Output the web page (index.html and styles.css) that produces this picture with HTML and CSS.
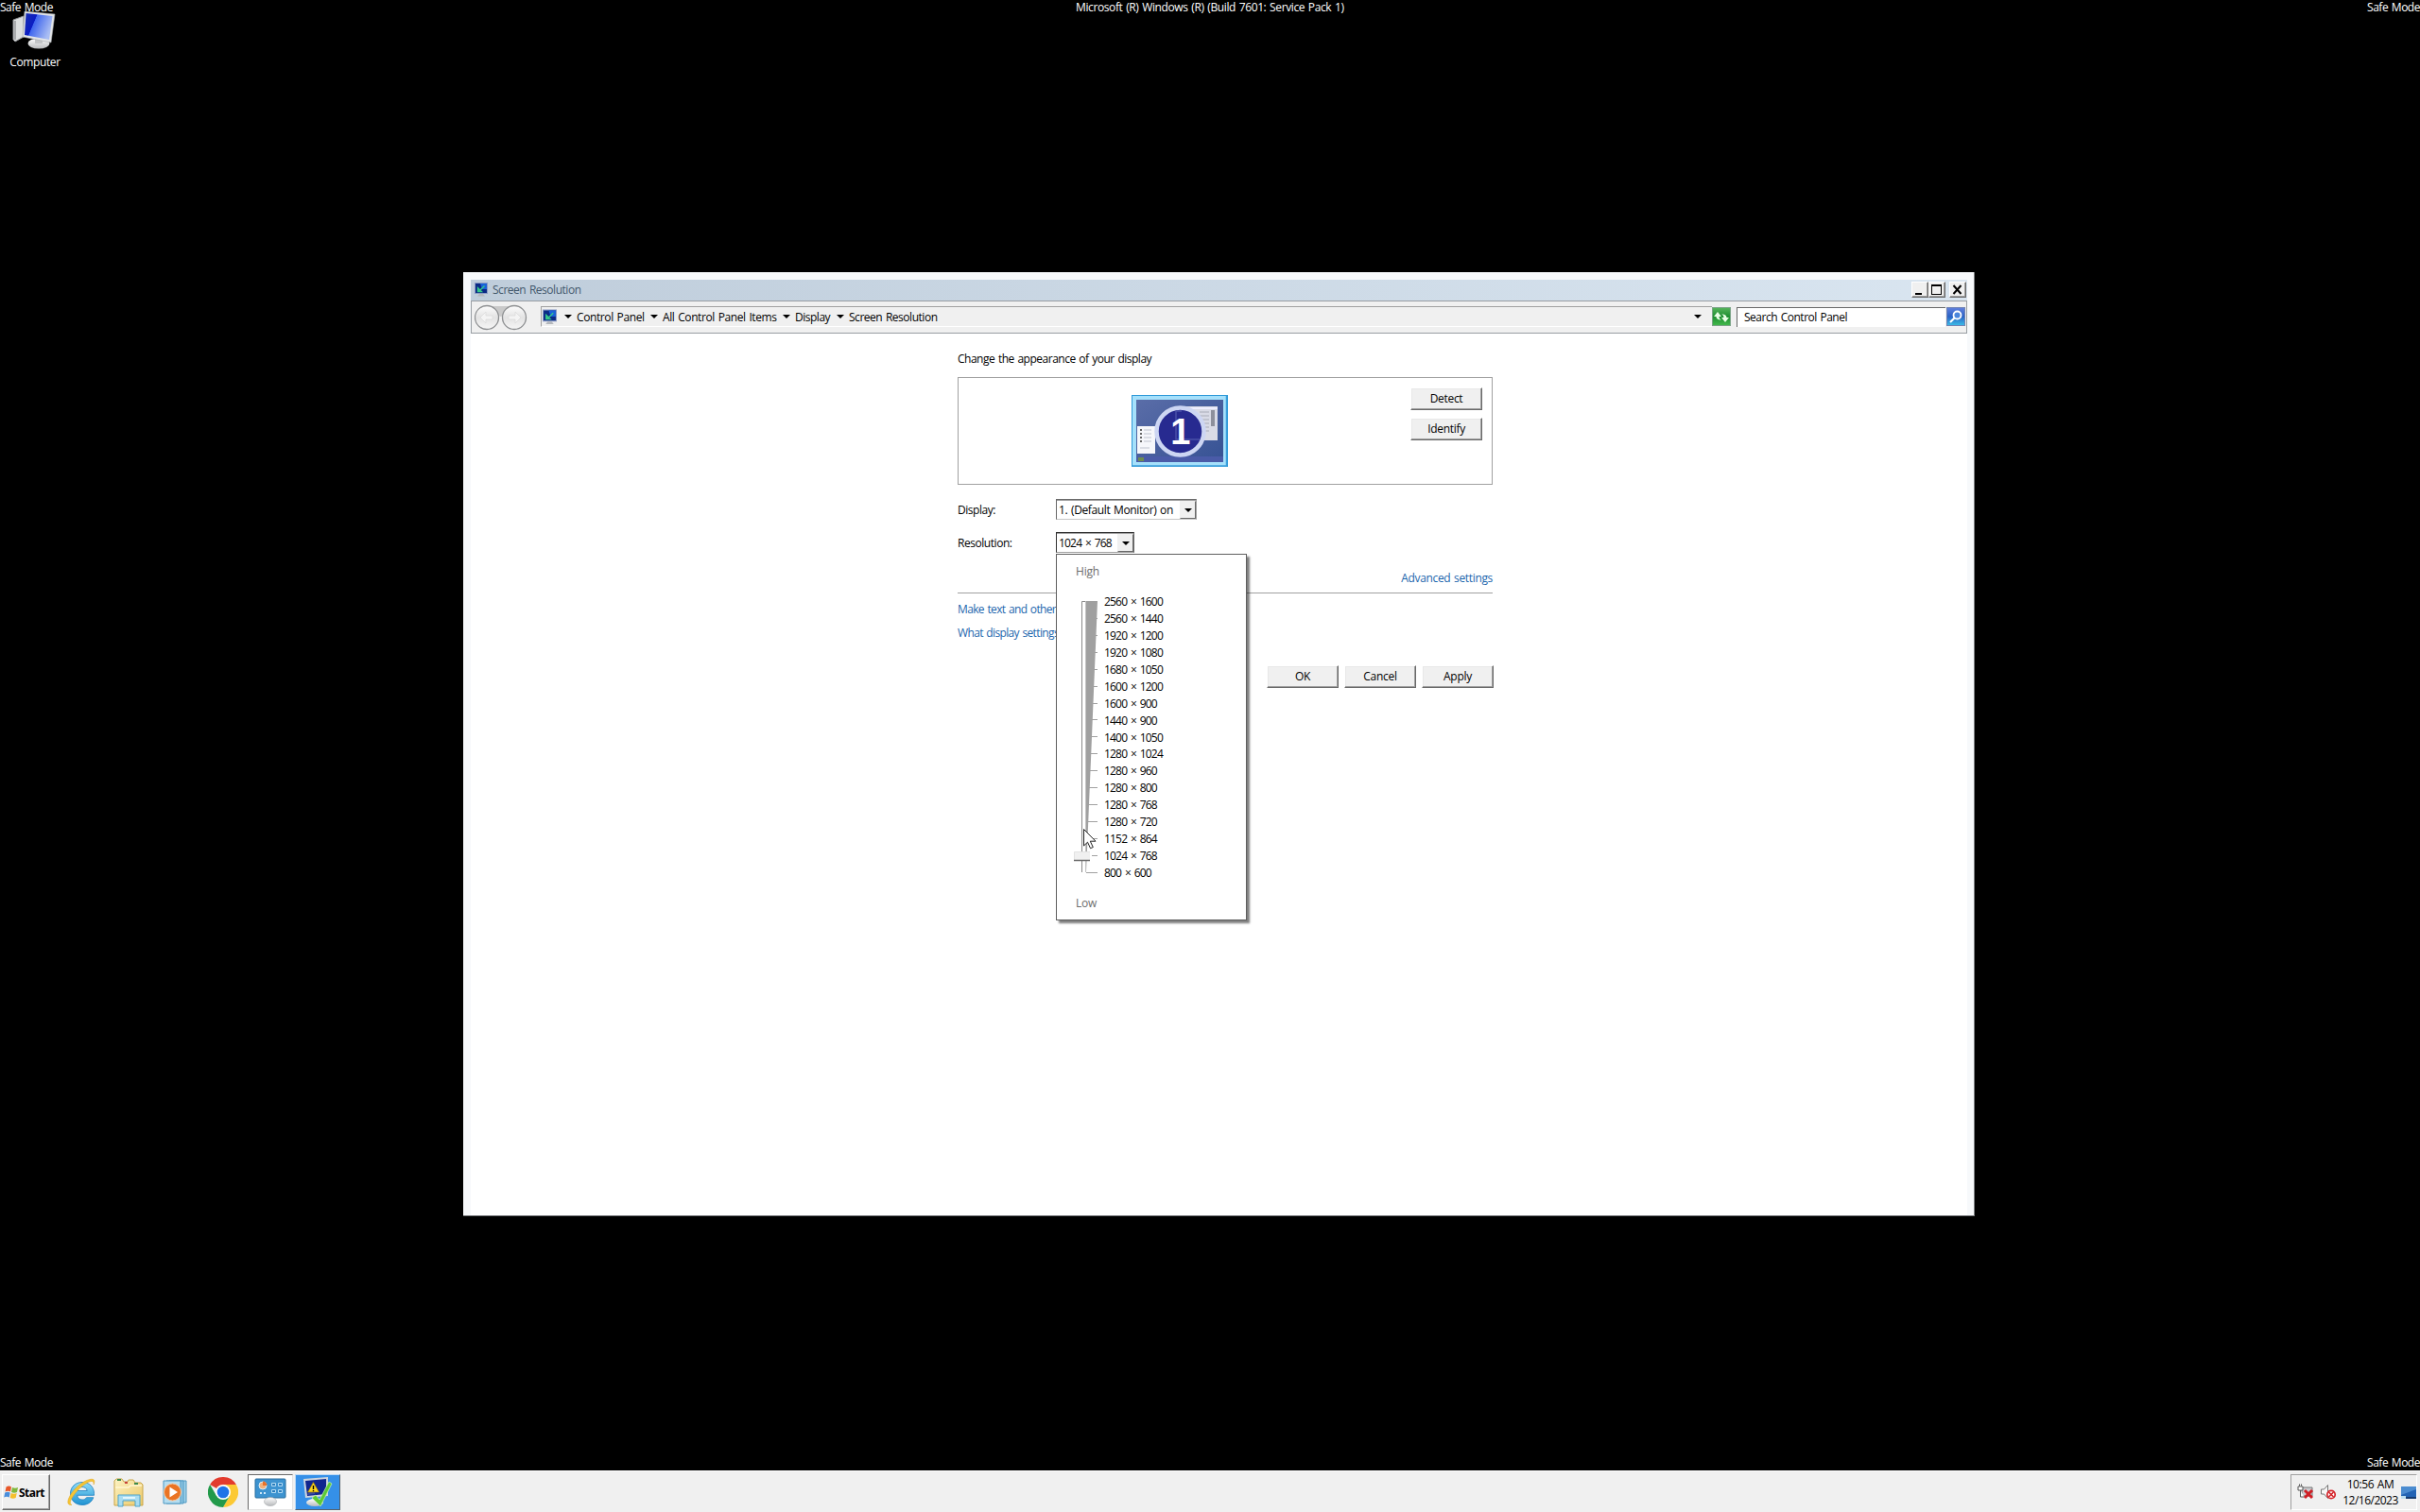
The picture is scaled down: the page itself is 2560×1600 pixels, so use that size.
FILE: index.html
```
<!DOCTYPE html>
<html lang="en">
  <head>
    <meta charset="UTF-8" />
    <meta name="viewport" content="width=device-width, initial-scale=1.0" />
    <title>Screen Resolution</title>
    <link rel="stylesheet" href="styles.css">
  </head>
  <body>
    <svg class="defs" width="0" height="0">
      <linearGradient id="screen" x1="0" y1="0" x2="1" y2="0.4">
        <stop offset="0" stop-color="#1a2fae" />
        <stop offset="0.4" stop-color="#0a1cc4" />
        <stop offset="0.42" stop-color="#3f66ee" />
        <stop offset="1" stop-color="#a9bdf3" />
      </linearGradient>
      <linearGradient id="metal" x1="0" y1="0" x2="0" y2="1">
        <stop offset="0" stop-color="#fff" />
        <stop offset="1" stop-color="#b9bbbd" />
      </linearGradient>
      <linearGradient id="ie" x1="0" y1="0" x2="0" y2="1">
        <stop offset="0" stop-color="#8fdcf8" />
        <stop offset="1" stop-color="#1f93d2" />
      </linearGradient>
      <linearGradient id="folder" x1="0" y1="0" x2="1" y2="1">
        <stop offset="0" stop-color="#fdf3c4" />
        <stop offset="1" stop-color="#ecc968" />
      </linearGradient>
      <linearGradient id="round" x1="0" y1="0" x2="0" y2="1">
        <stop offset="0" stop-color="#fdfdfd" />
        <stop offset="0.5" stop-color="#e3e3e3" />
        <stop offset="1" stop-color="#f6f6f6" />
      </linearGradient>
      <linearGradient id="desk" x1="0" y1="0" x2="1" y2="1">
        <stop offset="0" stop-color="#5a6da8" />
        <stop offset="1" stop-color="#365294" />
      </linearGradient>
      <symbol id="monitor" viewBox="0 0 14 15">
        <rect x="0.5" y="0.5" width="13" height="11" fill="#0a2a86" stroke="#8d9cc4" />
        <path d="M6 1h7v6H8z" fill="#1b62d8" />
        <path d="M10.500 3.500L6 8M3.500 5.500v4h4z" fill="#35c88a" stroke="#35c88a" stroke-width="1.300" />
        <path d="M5 12h4l2 2.500H3z" fill="#b4b7bc" />
      </symbol>
    </svg>

    <div class="desktop">
      <span class="mark mark-tl">Safe Mode</span>
      <span class="mark mark-top">Microsoft (R) Windows (R) (Build 7601: Service Pack 1)</span>
      <span class="mark mark-tr">Safe Mode</span>
      <span class="mark mark-bl">Safe Mode</span>
      <span class="mark mark-br">Safe Mode</span>

      <div class="shortcut">
        <svg width="48" height="42" viewBox="0 0 48 42">
          <path d="M1 9l11-4v22l-9 5-2-2z" fill="#dcdedf" stroke="#8e9194" />
          <path d="M3 10v20" stroke="#77797c" />
          <ellipse cx="28" cy="34" rx="11.500" ry="5.500" fill="url(#metal)" />
          <path d="M24 27h8v7h-8z" fill="#c3c5c7" />
          <path d="M13 0l32 3-4 30-30-6z" fill="#e3e5e7" stroke="#a5a8ab" stroke-width="0.6" />
          <path d="M14.500 2l28 3-3.500 25-26-5z" fill="url(#screen)" />
        </svg>
        <span>Computer</span>
      </div>

      <!-- Screen Resolution window -->
      <div class="window">
        <div class="titlebar">
          <svg class="title-icon" width="14" height="15"><use href="#monitor" /></svg>
          <span class="title">Screen Resolution</span>
          <div class="caption-btn"><svg width="17" height="17"><path d="M4 12h7v2H4z" /></svg></div>
          <div class="caption-btn"><svg width="17" height="17"><path d="M3 3h11v11H3zM4 5v8h9V5z" fill-rule="evenodd" /></svg></div>
          <div class="caption-btn close"><svg width="17" height="17"><path d="M4.500 4l8 9M12.500 4l-8 9" stroke="#000" stroke-width="2" /></svg></div>
        </div>

        <div class="navbar">
          <svg class="travel" width="56" height="28" viewBox="0 0 56 28">
            <path d="M14 2h28v8l-14 3-14-3z" fill="#c9c9c9" />
            <circle cx="13" cy="14" r="12.500" fill="url(#round)" stroke="#8d8f91" stroke-width="1.300" />
            <circle cx="42" cy="14" r="12.500" fill="url(#round)" stroke="#8d8f91" stroke-width="1.300" />
            <path d="M6 14l6-6v4h7v4h-7v4zM49 14l-6-6v4h-7v4h7v4z" fill="#f4f4f4" stroke="#dcdcdc" stroke-width="0.8" />
          </svg>
          <div class="address">
            <svg class="address-icon" width="15" height="17"><use href="#monitor" /></svg>
            <i class="arrow"></i>
            <span class="crumb crumb-panel">Control Panel</span>
            <i class="arrow"></i>
            <span class="crumb crumb-items">All Control Panel Items</span>
            <i class="arrow"></i>
            <span class="crumb crumb-display">Display</span>
            <i class="arrow"></i>
            <span class="crumb crumb-last">Screen Resolution</span>
            <i class="arrow arrow-end"></i>
          </div>
          <div class="go refresh">
            <svg width="18" height="17"><path d="M1 8l4-5 4 5H6.500c0 2 1 3 2.500 3.500-3 .5-5.500-1-5.500-3.500zM17 9l-4 5-4-5h2.500c0-2-1-3-2.500-3.500 3-.5 5.500 1 5.500 3.500z" fill="#e9ffe6" /></svg>
          </div>
          <div class="search">Search Control Panel</div>
          <div class="go find">
            <svg width="18" height="17"><circle cx="10.500" cy="6.500" r="4" fill="#4a86dc" stroke="#fff" stroke-width="1.800" /><path d="M7.500 9.500L3 14" stroke="#fff" stroke-width="2.200" /></svg>
          </div>
        </div>

        <div class="client">
          <div class="panel">
            <h1>Change the appearance of your display</h1>
            <div class="preview">
              <svg width="102" height="76" viewBox="0 0 102 76">
                <rect x="0.5" y="0.5" width="101" height="75" fill="#a5e0fb" stroke="#2f9ad8" />
                <path d="M100.500 1v74H1" fill="none" stroke="#3b9fdc" stroke-width="1.500" />
                <rect x="5" y="5" width="92" height="66" fill="url(#desk)" />
                <rect x="5" y="65" width="92" height="6" fill="#4a5ba8" />
                <rect x="7" y="66" width="6" height="4" fill="#6d8c50" />
                <path d="M47 12h44v36H47z" fill="#d9dbe6" />
                <path d="M47 14h44" stroke="#eef" stroke-width="2" />
                <path d="M72 18h10M72 22h10M72 26h10M72 30h10M72 34h10M72 38h10" stroke="#a9acb8" />
                <rect x="84" y="16" width="4" height="17" fill="#8d909c" />
                <rect x="6" y="33" width="19" height="29" fill="#f6f7fb" />
                <path d="M9 37h2M9 41h2M9 45h2M9 49h2" stroke="#666" stroke-width="2" />
                <path d="M13 37h8M13 41h8M13 45h8M13 49h8M9 56h10" stroke="#bfc3cf" />
                <circle cx="51.500" cy="38.500" r="25" fill="#272a90" stroke="#cdd6f3" stroke-width="4.500" />
                <path d="M47 17v30h25M47 17h6" fill="none" stroke="#4a50a8" stroke-width="1.500" />
                <text class="number" x="51.500" y="52" text-anchor="middle">1</text>
              </svg>
              <div class="preview-actions">
                <button>Detect</button>
                <button>Identify</button>
              </div>
            </div>

            <div class="field">
              <label>Display:</label>
              <div class="select select-display"><span>1. (Default Monitor) on</span><b><i class="arrow"></i></b></div>
            </div>
            <div class="field">
              <label>Resolution:</label>
              <div class="select select-resolution">
                <span>1024 × 768</span><b><i class="arrow"></i></b>
                <div class="popup">
                  <p>High</p>
                  <div class="scale">
                    <svg width="26" height="305" viewBox="0 0 26 305">
                      <path d="M8.500 295V8.500h4" fill="none" stroke="#8a8a8a" />
                      <path d="M12.500 9v286" stroke="#c4c4c4" />
                      <path d="M13 8h12L13 295z" fill="#a0a0a0" />
                      <path d="M13 26.500h12M13 44.500h12M13 62.500h12M13 80.500h12M13 98.500h12M13 116.500h12M13 133.500h12M13 151.500h12M13 169.500h12M13 187.500h12M13 205.500h12M13 223.500h12M13 241.500h12M18 259.500h7M19 277.500h6M13 295.500h12" stroke="#a0a0a0" />
                      <path d="M0 273h17v10H0z" fill="#f0f0f0" />
                      <path d="M0.500 282V273.500H17" fill="none" stroke="#e2e2e2" />
                      <path d="M0 282.500h17" stroke="#696969" stroke-width="1.500" />
                      <path d="M10.500 249.500v17.500l4-3.800 3 6.500 2.800-1.200-3-6.300h5.700z" fill="#fff" stroke="#222" />
                    </svg>
                    <ul>
                      <li>2560 × 1600</li>
                      <li>2560 × 1440</li>
                      <li>1920 × 1200</li>
                      <li>1920 × 1080</li>
                      <li>1680 × 1050</li>
                      <li>1600 × 1200</li>
                      <li>1600 × 900</li>
                      <li>1440 × 900</li>
                      <li>1400 × 1050</li>
                      <li>1280 × 1024</li>
                      <li>1280 × 960</li>
                      <li>1280 × 800</li>
                      <li>1280 × 768</li>
                      <li>1280 × 720</li>
                      <li>1152 × 864</li>
                      <li>1024 × 768</li>
                      <li>800 × 600</li>
                    </ul>
                  </div>
                  <p>Low</p>
                </div>
              </div>
            </div>

            <div class="advanced"><a>Advanced settings</a></div>
            <a class="help">Make text and other</a>
            <a class="help">What display settings</a>
            <div class="actions">
              <button>OK</button>
              <button>Cancel</button>
              <button>Apply</button>
            </div>
          </div>
        </div>
      </div>
    </div>

    <div class="taskbar">
      <div class="start">
        <svg width="16" height="16" viewBox="0 0 16 16">
          <path d="M2.500 2.500q3-2 5.500 0L7 7.500q-2.500-1.500-5.500 0z" fill="#e8582a" />
          <path d="M9 3q3 1.500 6 0l-1 5q-3 1.500-6 0z" fill="#7fb83c" />
          <path d="M1.200 8.500q3-1.500 5.500 0l-1 5q-2.500-1.500-5.500 0z" fill="#4a8edb" />
          <path d="M7.700 9q3 1.500 6 0l-1 5q-3 1.500-6 0z" fill="#f5bf2c" />
        </svg>
        <span>Start</span>
      </div>
      <div class="task">
        <svg width="32" height="32" viewBox="0 0 32 32">
          <path d="M29.500 17.500c0-7-5-12-12.500-12S4.500 10.800 4.500 17.500 9.500 29.500 17 29.500c5.500 0 10-2.800 11.800-7.800h-7.300c-1 1.500-2.500 2.300-4.500 2.300-3 0-5-1.800-5.300-4.700h17.800zM11.800 14.500c.5-2.500 2.500-4 5.200-4s4.700 1.500 5.200 4z" fill="url(#ie)" stroke="#1c7fc0" stroke-width="0.8" />
          <path d="M29 8c2-4.500.5-6.500-4-5.500C17 4 6 14 2.500 23c-1.500 4.500-.5 7 3.500 6.500-2.500-1-2-4 .5-8C11 14 20 6 26 4.500c2.500-.5 3.500.8 3 3.500z" fill="#f6c534" stroke="#dfa31c" stroke-width="0.5" />
        </svg>
      </div>
      <div class="task">
        <svg width="34" height="32" viewBox="0 0 34 32">
          <path d="M2 30V4l2-2h6l2 3h4l1-2h5l2 3h6l2 2v22z" fill="url(#folder)" stroke="#c9a548" />
          <path d="M5 3h4M23 7h4" stroke="#3d8a4a" stroke-width="2" />
          <path d="M13 6h3" stroke="#c6423a" stroke-width="2" />
          <path d="M3 11h14l2-2h12" fill="none" stroke="#fff6d2" stroke-width="1.500" />
          <path d="M6 31V19h23v12h-5v-6H11v6z" fill="#a8dcf1" stroke="#4fa3ca" />
          <path d="M11 22h13" stroke="#e3f6fd" stroke-width="2" />
        </svg>
      </div>
      <div class="task">
        <svg width="30" height="28" viewBox="0 0 30 28">
          <path d="M8 2h18v23H8z" fill="#9fd0e8" stroke="#4c98c2" />
          <path d="M5 2h18v24H5z" fill="#8cc4e2" stroke="#4c98c2" />
          <path d="M2 2h18v24H2z" fill="#b5ddf0" stroke="#4c98c2" />
          <circle cx="11.500" cy="14" r="9" fill="#ea7424" stroke="#f8c9a0" />
          <path d="M8.500 8.500v11l8.500-5.500z" fill="#fff" />
        </svg>
      </div>
      <div class="task">
        <svg width="32" height="32" viewBox="0 0 32 32">
          <path d="M16 16L2.140 8A16 16 0 0 1 29.860 8H16z" fill="#e33b2e" />
          <path d="M16 8h13.860A16 16 0 0 1 16 32l6.930-12z" fill="#fcc934" />
          <path d="M9.070 20L2.140 8A16 16 0 0 0 16 32l6.930-12z" fill="#229a4a" />
          <circle cx="16" cy="16" r="8" fill="#fff" />
          <circle cx="16" cy="16" r="6.300" fill="#1f73e8" />
        </svg>
      </div>
      <div class="task pressed">
        <svg width="34" height="30" viewBox="0 0 34 30">
          <rect x="1" y="1" width="32" height="20" rx="1" fill="#3d93d0" stroke="#2b6f9f" />
          <circle cx="9" cy="8" r="4" fill="#f2b27c" stroke="#dceefa" />
          <path d="M9 8V3.500A4.500 4.500 0 0 1 13.500 8z" fill="#e8722a" />
          <path d="M18.500 5.500h4v3h-4zM25.500 5.500h4v3h-4zM18.500 12.500h4v3h-4zM25.500 12.500h4v3h-4z" fill="#2a7dbd" stroke="#b5dcf4" />
          <path d="M6 16h2M10 16h2" stroke="#cfe8f8" stroke-width="2" />
          <ellipse cx="17" cy="25" rx="6.500" ry="4.500" fill="url(#metal)" stroke="#9a9da0" stroke-width="0.5" />
        </svg>
      </div>
      <div class="task active">
        <svg width="34" height="34" viewBox="0 0 34 34">
          <ellipse cx="14" cy="28" rx="9" ry="4" fill="url(#metal)" />
          <path d="M2 3l26-2v20L4 23z" fill="#cfd6de" />
          <path d="M4 5l22-2v16L6 21z" fill="#10268f" />
          <path d="M12 6l-6 14 8-1z" fill="#3b4aa0" />
          <path d="M12.500 6.500l6 10.500h-12z" fill="#fbd51d" stroke="#8b6b00" stroke-width="0.6" />
          <path d="M12.500 10v4M12.500 15v1.200" stroke="#000" stroke-width="1.400" />
          <path d="M11 23l4-3 4 5L29 6l3 2-12 24z" fill="#5ccb35" stroke="#c9efbd" stroke-width="0.7" />
        </svg>
      </div>

      <div class="tray">
        <svg class="tray-icon" width="18" height="18" viewBox="0 0 18 18">
          <path d="M5 4h11v9H5z" fill="#c9ccd0" stroke="#777" />
          <path d="M1 3h5v4H1zM2.500 0.500v2M4.500 0.500v2M3.500 7v7h4" fill="#fff" stroke="#555" />
          <path d="M8 7l8 8M16 7l-8 8" stroke="#cf1f25" stroke-width="3" />
        </svg>
        <svg class="tray-icon" width="18" height="18" viewBox="0 0 18 18">
          <path d="M1.500 6h3l4-4.500v14l-4-4.500h-3z" fill="#f8f8f8" stroke="#777" />
          <circle cx="12" cy="11.500" r="4.200" fill="#fff" stroke="#d4252b" stroke-width="1.700" />
          <path d="M9.500 9l5 5M14.500 9l-5 5" stroke="#d4252b" stroke-width="1.700" />
        </svg>
        <div class="clock"><span class="time">10:56 AM</span><span class="date">12/16/2023</span></div>
        <svg width="16" height="13" viewBox="0 0 16 13">
          <path d="M0 0h16v13H0z" fill="#2263b4" />
          <path d="M0 0h16v3L0 9z" fill="#4b8cd0" />
          <path d="M0 11h16v2H0z" fill="#173c70" />
          <path d="M0 10h5v3H0z" fill="#bfe0f0" />
        </svg>
      </div>
    </div>
  </body>
</html>
```
FILE: styles.css
```
* {
  box-sizing: border-box;
}
body {
  margin: 0;
  width: 2560px;
  height: 1600px;
  display: flex;
  flex-direction: column;
  overflow: hidden;
  background: #000;
  color: #000;
  font: 12px/17px "Open Sans", "Noto Sans", sans-serif;
  letter-spacing: -0.49px;
  word-spacing: 1px;
  white-space: nowrap;
}
svg {
  display: block;
  flex: none;
}
.defs {
  position: absolute;
}

/* desktop */
.desktop {
  position: relative;
  height: 1556px;
  color: #fff;
}
.mark {
  position: absolute;
  z-index: 1;
  letter-spacing: -0.48px;
}
.mark-tl {
  left: 0;
  top: -1px;
}
.mark-top {
  left: 1138px;
  top: -1px;
  letter-spacing: -0.39px;
}
.mark-tr {
  right: 0;
  top: -1px;
}
.mark-bl {
  left: 0;
  bottom: 0;
}
.mark-br {
  right: 0;
  bottom: 0;
}
.shortcut {
  position: absolute;
  left: 0;
  top: 12px;
  width: 74px;
  display: flex;
  flex-direction: column;
  align-items: center;
  gap: 3px;
  letter-spacing: -0.4px;
}

/* window */
.window {
  position: absolute;
  left: 490px;
  top: 288px;
  width: 1599px;
  height: 999px;
  padding: 8px 7px 8px 8px;
  background: #f7f9fb;
  border-right: 1px solid #7b7d80;
  border-bottom: 1px solid #7b7d80;
  color: #000;
}
.titlebar {
  display: flex;
  align-items: center;
  height: 22px;
  padding: 0 1px 1px 4px;
  background: linear-gradient(to right, #bfcddb, #d9e5f0);
}
.title {
  flex: 1;
  margin-left: 5px;
  color: #43586c;
  letter-spacing: -0.47px;
}
.caption-btn {
  width: 18px;
  height: 17px;
  background: #f0f0f0;
  border: 1px solid;
  border-color: #fff #696969 #696969 #fff;
  box-shadow: inset -1px -1px #a0a0a0;
}
.caption-btn svg {
  margin: -1px;
}
.close {
  margin-left: 4px;
}

.navbar {
  display: flex;
  height: 35px;
  padding: 3px 1px 0 3px;
  background: #f0f0f0;
  border: 1px solid #989da2;
}
.address {
  flex: 1;
  display: flex;
  align-items: center;
  height: 22px;
  margin: 2px 0 0 14px;
  border-left: 1px solid #a0a0a0;
  border-top: 1px solid #a0a0a0;
  border-bottom: 1px solid #fff;
}
.address-icon {
  margin: 0 8px 0 1px;
}
.arrow {
  flex: none;
  width: 0;
  height: 0;
  border: 4px solid transparent;
  border-top-color: #000;
  border-bottom: 0;
}
.crumb {
  padding: 0 5px;
}
.crumb-panel {
  width: 83px;
  letter-spacing: -0.39px;
}
.crumb-items {
  width: 132px;
  letter-spacing: -0.4px;
}
.crumb-display {
  width: 49px;
}
.crumb-last {
  letter-spacing: -0.47px;
}
.arrow-end {
  margin-left: auto;
  margin-right: 11px;
}
.go {
  width: 20px;
  height: 20px;
  margin-top: 3px;
  padding: 1px 0;
  border: 1px solid #7aa386;
}
.refresh {
  background: linear-gradient(#55b35a, #1d8e30 50%, #43b84c);
}
.search {
  width: 221px;
  height: 21px;
  margin: 3px 1px 0 6px;
  padding: 1px 0 0 7px;
  background: #fff;
  border-left: 1px solid #696969;
  border-top: 1px solid #696969;
}
.find {
  border-color: #6f83b4;
  background: linear-gradient(#5f7fdb, #2a62c6 50%, #3ab9e6);
}

/* content */
.client {
  height: 933px;
  padding: 18px 0 0 515px;
  background: #fff;
}
.panel {
  width: 566px;
  display: flex;
  flex-direction: column;
}
h1 {
  margin: 0 0 11px;
  font: inherit;
}
.preview {
  display: flex;
  justify-content: space-between;
  height: 114px;
  margin-bottom: 15px;
  padding: 10px 10px 0 183px;
  border: 1px solid #a0a0a0;
}
.preview svg {
  margin-top: 8px;
}
.number {
  font: bold 38px "Liberation Sans", Arial, sans-serif;
  fill: #fff;
}
.preview-actions {
  display: flex;
  flex-direction: column;
  gap: 8px;
}
button {
  width: 76px;
  height: 24px;
  padding: 0 0 1px;
  background: #f0f0f0;
  border: 1px solid;
  border-color: #fff #696969 #696969 #fff;
  box-shadow: inset -1px -1px #a0a0a0, inset 1px 1px #e8e8e8;
  color: #000;
  font: inherit;
  letter-spacing: -0.3px;
}
.field {
  display: flex;
  align-items: center;
  height: 22px;
  margin-bottom: 13px;
}
.field label {
  width: 104px;
  letter-spacing: -0.45px;
}
.select {
  position: relative;
  display: flex;
  height: 22px;
  padding-left: 2px;
  border: 1px solid;
  border-color: #696969 #a0a0a0 #c8c8c8 #696969;
  box-shadow: inset 0 1px #a0a0a0;
}
.select > span {
  flex: 1;
  line-height: 21px;
}
.select b {
  display: flex;
  align-items: center;
  justify-content: center;
  width: 17px;
  margin-top: 1px;
  background: #f0f0f0;
  border: 1px solid;
  border-color: #f0f0f0 #696969 #696969 #f0f0f0;
}
.select-display {
  width: 149px;
  letter-spacing: -0.38px;
}
.select-resolution {
  width: 83px;
  border-color: #333 #696969 #a0a0a0 #333;
  letter-spacing: -0.8px;
  word-spacing: 1.4px;
}

/* resolution drop-down */
.popup {
  position: absolute;
  left: -1px;
  top: 22px;
  width: 202px;
  height: 388px;
  padding: 9px 0 0 18px;
  background: #fff;
  border: 1px solid #5f5f5f;
  box-shadow: 3px 3px 2px rgba(0, 0, 0, 0.5);
  color: #6d6d6d;
}
.popup p {
  margin: 0 0 0 2px;
  letter-spacing: -0.2px;
}
.scale {
  display: flex;
  gap: 6px;
  margin: 15px 0 14px;
  color: #000;
}
.scale ul {
  margin: 0;
  padding: 0;
  list-style: none;
}
.scale li {
  height: 17.94px;
  line-height: 17.94px;
}

a {
  color: #1c66ad;
}
.advanced {
  height: 25px;
  margin: 5px 0 8px;
  border-bottom: 1px solid #a0a0a0;
  text-align: right;
  letter-spacing: -0.34px;
}
.help {
  margin-bottom: 8px;
  letter-spacing: -0.64px;
}
.actions {
  display: flex;
  justify-content: flex-end;
  gap: 6px;
  margin: 18px -1px 0 0;
}

/* taskbar */
.taskbar {
  display: flex;
  height: 44px;
  padding: 3px 3px 2px 2px;
  background: #f0f0f0;
  border-top: 1px solid #fff;
}
.start {
  display: flex;
  align-items: center;
  width: 51px;
  height: 38px;
  margin-right: 9px;
  padding-left: 1px;
  border: 1px solid;
  border-color: #fff #696969 #696969 #fff;
  box-shadow: inset -1px -1px #a0a0a0;
  font-weight: bold;
  letter-spacing: -0.55px;
}
.task {
  display: flex;
  align-items: center;
  justify-content: center;
  width: 48px;
  height: 38px;
  margin-right: 2px;
}
.pressed {
  background: #fff;
  border: 1px solid;
  border-color: #696969 #e3e3e3 #e3e3e3 #696969;
}
.active {
  background: #3590e8;
  border: 1px solid;
  border-color: #b9d9f6 #55606b #55606b #b9d9f6;
}
.tray {
  display: flex;
  align-items: center;
  width: 134px;
  height: 38px;
  margin-left: auto;
  padding-left: 6px;
  border: 1px solid;
  border-color: #a0a0a0 #fff #fff #a0a0a0;
}
.tray-icon {
  margin-right: 6px;
}
.clock {
  display: flex;
  flex-direction: column;
  align-items: center;
  width: 60px;
  margin-right: 3px;
}
.time {
  letter-spacing: -0.42px;
}
.date {
  letter-spacing: -0.52px;
}
```
